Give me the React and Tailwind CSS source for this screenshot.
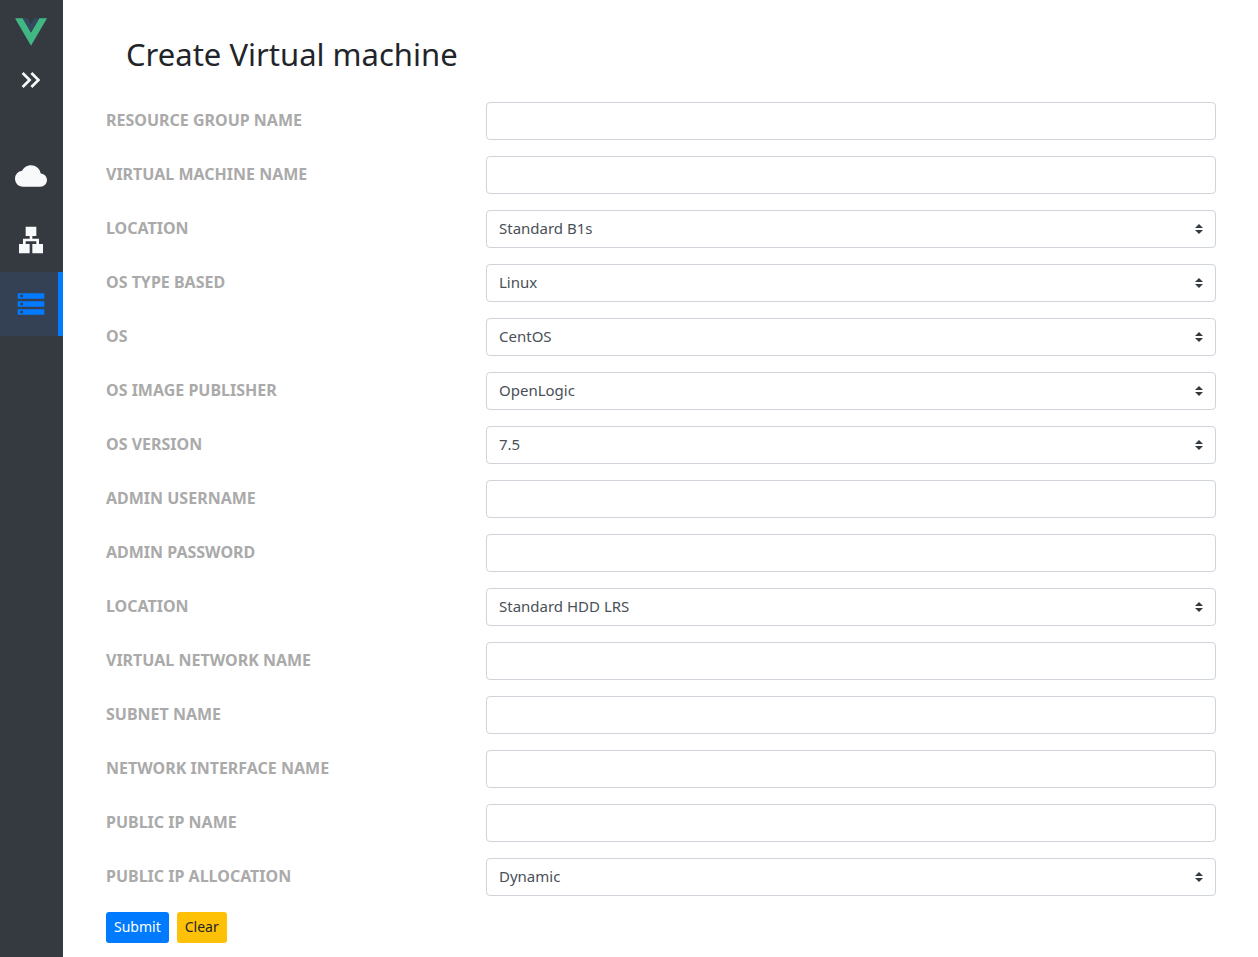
import React from "react";

const fields = [
  { id: "resource-group", label: "Resource group name" },
  { id: "vm-name", label: "Virtual machine name" },
  { id: "vm-size", label: "Location", options: ["Standard B1s"] },
  { id: "os-type", label: "OS type based", options: ["Linux"] },
  { id: "os", label: "OS", options: ["CentOS"] },
  { id: "os-publisher", label: "OS image publisher", options: ["OpenLogic"] },
  { id: "os-version", label: "OS version", options: ["7.5"] },
  { id: "admin-username", label: "Admin username" },
  { id: "admin-password", label: "Admin password", type: "password" },
  { id: "disk-type", label: "Location", options: ["Standard HDD LRS"] },
  { id: "vnet-name", label: "Virtual network name" },
  { id: "subnet-name", label: "Subnet name" },
  { id: "nic-name", label: "Network interface name" },
  { id: "public-ip-name", label: "Public IP name" },
  { id: "public-ip-allocation", label: "Public IP allocation", options: ["Dynamic"] },
];

const controlClass =
  "block h-[38px] w-full appearance-none rounded border border-[#ced4da] bg-white px-3 pb-px text-[15px] text-[#495057] outline-none focus:border-[#80bdff]";

function Icon({ children }) {
  return (
    <svg viewBox="0 0 24 24" className="size-8" fill="currentColor" aria-hidden="true">
      {children}
    </svg>
  );
}

function NavLink({ label, active, children }) {
  return (
    <a
      href="#"
      aria-label={label}
      aria-current={active ? "page" : undefined}
      className={
        active
          ? "flex h-16 items-center border-r-5 border-[#007bff] bg-[#344154] pl-[15px] text-[#007bff]"
          : "flex h-16 items-center pl-[15px] text-[#f8f9fa]"
      }
    >
      <Icon>{children}</Icon>
    </a>
  );
}

function Sidebar() {
  return (
    <aside className="w-[63px] shrink-0 bg-[#343a40] pt-4 text-[#f8f9fa]">
      <a href="#" aria-label="Home" className="block pl-[15px]">
        <svg viewBox="0 -13.15 196.32 196.32" className="size-8" aria-hidden="true">
          <path fill="#41b883" d="M149.16 0 98.16 88.3 47.16 0H0l98.16 170.02L196.32 0z" />
          <path fill="#34495e" d="M149.16 0 98.16 88.3 47.16 0h30.33l20.67 35.8L118.83 0z" />
        </svg>
      </a>
      <button type="button" aria-label="Expand menu" className="mt-4 block pl-[15px]">
        <Icon>
          <path d="M6.41 6 5 7.41 9.58 12 5 16.59 6.41 18l6-6z" />
          <path d="m13 6-1.41 1.41L16.17 12l-4.58 4.59L13 18l6-6z" />
        </Icon>
      </button>
      <nav className="mt-12">
        <NavLink label="Cloud">
          <path d="M19.35 10.04A7.49 7.49 0 0 0 12 4C9.11 4 6.6 5.64 5.35 8.04A5.994 5.994 0 0 0 0 14c0 3.31 2.69 6 6 6h13c2.76 0 5-2.24 5-5 0-2.64-2.05-4.78-4.65-4.96z" />
        </NavLink>
        <NavLink label="Networks">
          <path d="M13 22h8v-7h-3v-4h-5V9h3V2H8v7h3v2H6v4H3v7h8v-7H8v-2h8v2h-3z" />
        </NavLink>
        <NavLink label="Virtual machines" active>
          <path d="M2 20h20v-4H2v4zm2-3h2v2H4v-2zM2 4v4h20V4H2zm4 3H4V5h2v2zm-4 7h20v-4H2v4zm2-3h2v2H4v-2z" />
        </NavLink>
      </nav>
    </aside>
  );
}

function Field({ id, label, type = "text", options }) {
  return (
    <div className="grid grid-cols-[1fr_2fr]">
      <label
        htmlFor={id}
        className="self-center px-[15px] pb-0.5 text-base leading-6 font-bold text-[#aaa] uppercase"
      >
        {label}
      </label>
      <div className="px-[15px]">
        {options ? (
          <div className="relative">
            <select id={id} className={controlClass}>
              {options.map((o) => (
                <option key={o}>{o}</option>
              ))}
            </select>
            <svg
              viewBox="0 0 4 5"
              className="pointer-events-none absolute top-[14px] right-[13px] h-[10px] w-2"
              fill="#343a40"
              aria-hidden="true"
            >
              <path d="M2 0 0 2h4zm0 5L0 3h4z" />
            </svg>
          </div>
        ) : (
          <input id={id} type={type} className={controlClass} />
        )}
      </div>
    </div>
  );
}

export default function App() {
  return (
    <div className="flex min-h-screen bg-white font-['Noto_Sans',sans-serif] text-[#212529]">
      <Sidebar />
      <main className="min-w-0 flex-1 pt-9 pr-[27px] pb-3 pl-7">
        <h1 className="px-[35px] text-[31px] leading-9">Create Virtual machine</h1>
        <form className="mt-[30px] flex flex-col gap-4" onSubmit={(e) => e.preventDefault()}>
          {fields.map((f) => (
            <Field key={f.id} {...f} />
          ))}
          <div className="flex gap-2 px-[15px]">
            <button type="submit" className="h-[31px] rounded-[3px] bg-[#007bff] px-2 pb-0.5 text-sm text-white">
              Submit
            </button>
            <button type="reset" className="h-[31px] rounded-[3px] bg-[#ffc107] px-2 pb-0.5 text-sm text-[#212529]">
              Clear
            </button>
          </div>
        </form>
      </main>
    </div>
  );
}
